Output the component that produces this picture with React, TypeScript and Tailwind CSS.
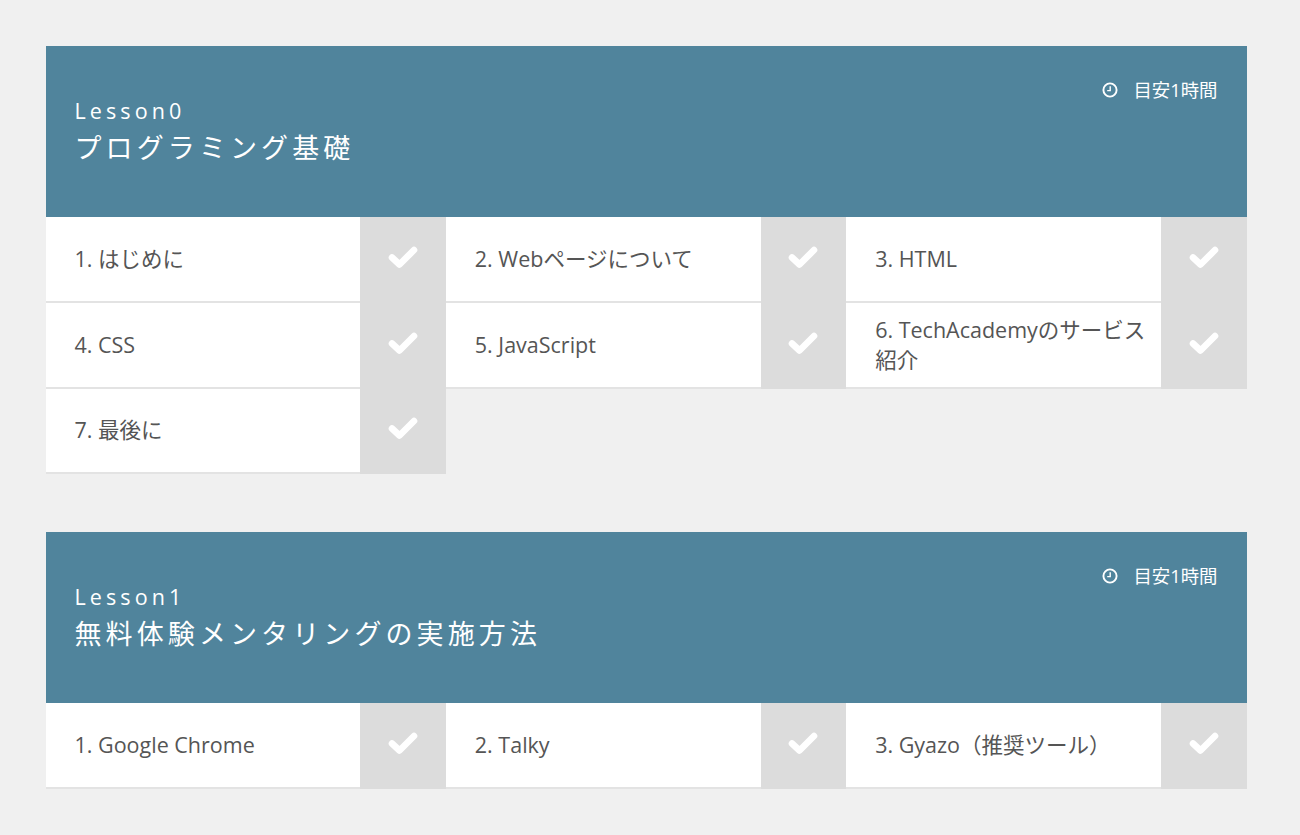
import React from "react";

const FONT = "font-['Open_Sans','Noto_Sans_CJK_JP',sans-serif]";

function Clock() {
  return (
    <svg width="16" height="16" viewBox="0 0 16 16" fill="none" stroke="currentColor" className="shrink-0">
      <circle cx="8" cy="8" r="6.6" strokeWidth="1.9" />
      <path d="M8.2 4.2V8.6H5.2" strokeWidth="1.4" />
    </svg>
  );
}

function Check() {
  return (
    <svg width="30" height="22" viewBox="0 0 30 22" fill="none" stroke="white" strokeWidth="6.6" strokeLinecap="round" strokeLinejoin="round">
      <path d="M4 11.5 L11.5 18.5 L26 4" />
    </svg>
  );
}

function Cell({ label }: { label: string }) {
  return (
    <div className="flex h-[85.8px]">
      <div className="flex-1 flex items-center pl-[29px] pr-[12px] bg-white border-b-2 border-[#e3e3e3] text-[#555555] text-[21.5px] leading-[30px]">
        <span>{label}</span>
      </div>
      <div className="w-[85.5px] shrink-0 bg-[#dcdcdc] flex items-center justify-center pb-[6px]">
        <Check />
      </div>
    </div>
  );
}

function Lesson({ no, title, items }: { no: string; title: string; items: string[] }) {
  return (
    <section className="w-[1201px]">
      <header className="relative h-[171.5px] bg-[#50849c] text-white pl-[29px] pt-[51px]">
        <div className="text-[21.5px] leading-[28px] tracking-[4.1px]">{no}</div>
        <h2 className="text-[27px] leading-[40px] tracking-[4.1px] font-normal mt-[3px]">{title}</h2>
        <div className="absolute right-[29px] top-[32px] flex items-center gap-[15px] text-[18.4px] leading-[24px]">
          <Clock />
          <span>目安1時間</span>
        </div>
      </header>
      <div className="grid grid-cols-3">
        {items.map((t) => (
          <Cell key={t} label={t} />
        ))}
      </div>
    </section>
  );
}

export default function App() {
  return (
    <div className={`min-h-[835px] bg-[#f0f0f0] pl-[45.5px] pt-[45.5px] flex flex-col gap-[57.5px] ${FONT}`}>
      <Lesson
        no="Lesson0"
        title="プログラミング基礎"
        items={["1. はじめに", "2. Webページについて", "3. HTML", "4. CSS", "5. JavaScript", "6. TechAcademyのサービス紹介", "7. 最後に"]}
      />
      <Lesson
        no="Lesson1"
        title="無料体験メンタリングの実施方法"
        items={["1. Google Chrome", "2. Talky", "3. Gyazo（推奨ツール）"]}
      />
    </div>
  );
}
